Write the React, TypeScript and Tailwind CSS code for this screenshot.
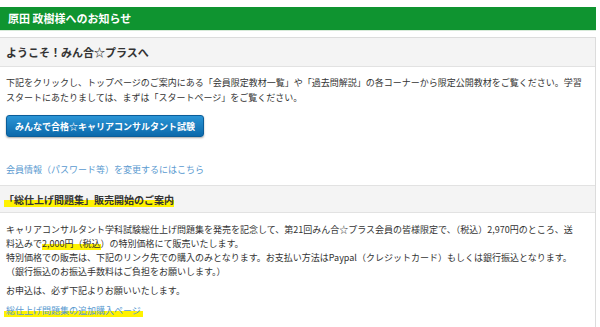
import React from "react";

const hl = "bg-[linear-gradient(transparent_52%,#fff200_52%)]";

export default function App() {
  return (
    <div
      className="w-[600px] h-[327px] overflow-hidden bg-white text-[#333]"
      style={{ fontFamily: '"Noto Sans CJK JP", "Noto Sans", sans-serif' }}
    >
      <div className="pt-[7px] pr-[4px]">
        <div className="h-[24px] bg-[#0f9430] px-[8px] flex items-center text-white font-bold text-[11px] border-b border-[#d7ead9]">
          原田 政樹様へのお知らせ
        </div>
        <div className="mt-[6px] border border-l-0 border-[#dcdcdc]">
          <div className="h-[29px] bg-[#f4f4f4] border-b border-[#e2e2e2] px-[6px] flex items-center font-bold text-[11px] text-[#333]">
            ようこそ！みん合☆プラスへ
          </div>
          <div className="px-[6px] pt-[8px] pb-[8px] text-[9px] leading-[15px]">
            <p>
              下記をクリックし、トップページのご案内にある「会員限定教材一覧」や「過去問解説」の各コーナーから限定公開教材をご覧ください。学習
              <br />
              スタートにあたりましては、まずは「スタートページ」をご覧ください。
            </p>
            <button className="mt-[10px] h-[22px] px-[8px] rounded-[3px] bg-[linear-gradient(#2b95d6,#0b69ab)] border border-[#0a5d99] text-white font-bold text-[9px] shadow-[0_1px_2px_rgba(0,0,0,0.35)]">
              みんなで合格☆キャリアコンサルタント試験
            </button>
            <p className="mt-[25px] text-[#5a9ad0]">会員情報（パスワード等）を変更するにはこちら</p>
          </div>
          <div className="h-[28px] bg-[#f4f4f4] border-y border-[#e2e2e2] px-[4px] flex items-center font-bold text-[10px] text-[#333]">
            <span className={hl}>「総仕上げ問題集」販売開始のご案内</span>
          </div>
          <div className="px-[6px] pt-[10px] pb-[20px] text-[9px] leading-[14px]">
            <p>
              キャリアコンサルタント学科試験総仕上げ問題集を発売を記念して、第21回みん合☆プラス会員の皆様限定で、（税込）2,970円のところ、送
              <br />
              料込みで<span className={hl}>2,000円（税込</span>）の特別価格にて販売いたします。
              <br />
              特別価格での販売は、下記のリンク先での購入のみとなります。お支払い方法はPaypal（クレジットカード）もしくは銀行振込となります。
              <br />
              （銀行振込のお振込手数料はご負担をお願いします。）
            </p>
            <p className="mt-[5px]">お申込は、必ず下記よりお願いいたします。</p>
            <p className="mt-[6px] -ml-[2px]">
              <span className={`${hl} text-[#5a9ad0] px-[2px]`}>総仕上げ問題集の追加購入ページ</span>
            </p>
          </div>
        </div>
      </div>
    </div>
  );
}
